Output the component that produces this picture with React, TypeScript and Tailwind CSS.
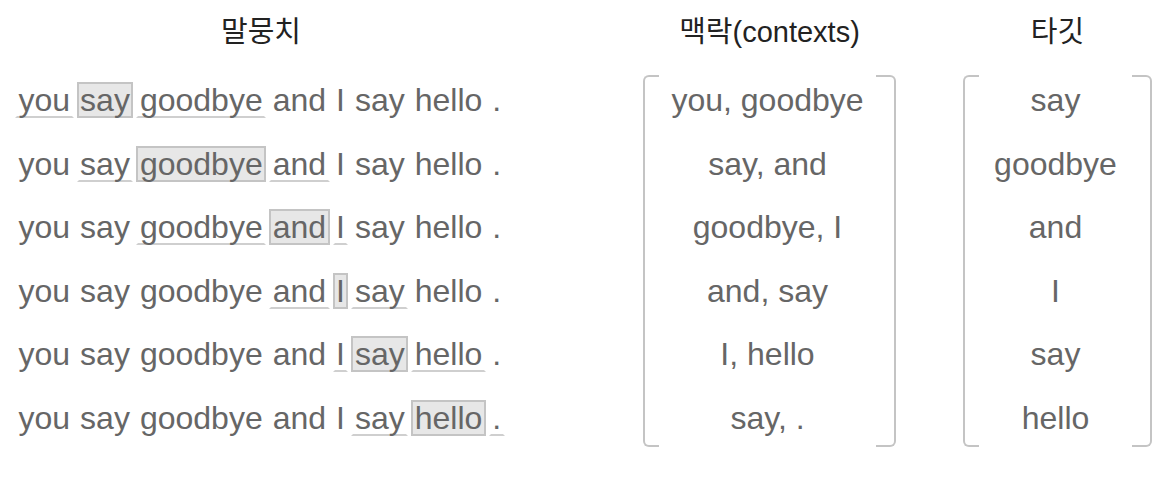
const SENTENCE = ["you", "say", "goodbye", "and", "I", "say", "hello", "."];

const CONTEXTS = ["you, goodbye", "say, and", "goodbye, I", "and, say", "I, hello", "say, ."];
const TARGETS = ["say", "goodbye", "and", "I", "say", "hello"];

const FONT = "font-['Liberation_Sans','Noto_Sans_CJK_KR',sans-serif]";

function Word({ text, kind }: { text: string; kind: "target" | "context" | "plain" }) {
  const style =
    kind === "target"
      ? "border-[#c4c4c4] bg-[#e7e7e7]"
      : kind === "context"
        ? "border-transparent border-b-[#cfcfcf]"
        : "border-transparent";
  return <span className={`inline-block border-2 px-[1.5px] leading-[32px] ${style}`}>{text}</span>;
}

function Bracketed({ items }: { items: string[] }) {
  return (
    <div className="flex h-[372px]">
      <div className="w-[16px] rounded-l-[6px] border-y-2 border-l-2 border-[#c4c4c4]" />
      <div className="flex flex-1 flex-col gap-[13.5px]">
        {items.map((t, i) => (
          <div key={i} className="flex h-[50px] items-center justify-center">
            {t}
          </div>
        ))}
      </div>
      <div className="w-[20px] rounded-r-[6px] border-y-2 border-r-2 border-[#c4c4c4]" />
    </div>
  );
}

function Header({ children }: { children: string }) {
  return <div className="flex h-[66px] items-center justify-center text-[29px] text-[#222]">{children}</div>;
}

export default function App() {
  return (
    <div className={`flex h-[478px] w-[1172px] bg-white pl-[15px] text-[32px] text-[#666] ${FONT}`}>
      <div className="w-[492px]">
        <Header>말뭉치</Header>
        <div className="mt-[9px] flex flex-col gap-[13.5px]">
          {SENTENCE.slice(0, 6).map((_, row) => {
            const target = row + 1;
            return (
              <div key={row} className="flex h-[50px] items-center gap-[3px]">
                {SENTENCE.map((w, i) => (
                  <Word
                    key={i}
                    text={w}
                    kind={i === target ? "target" : Math.abs(i - target) === 1 ? "context" : "plain"}
                  />
                ))}
              </div>
            );
          })}
        </div>
      </div>

      <div className="ml-[136px] w-[253px]">
        <Header>맥락(contexts)</Header>
        <div className="mt-[9px]">
          <Bracketed items={CONTEXTS} />
        </div>
      </div>

      <div className="ml-[67px] w-[189px]">
        <Header>타깃</Header>
        <div className="mt-[9px]">
          <Bracketed items={TARGETS} />
        </div>
      </div>
    </div>
  );
}
